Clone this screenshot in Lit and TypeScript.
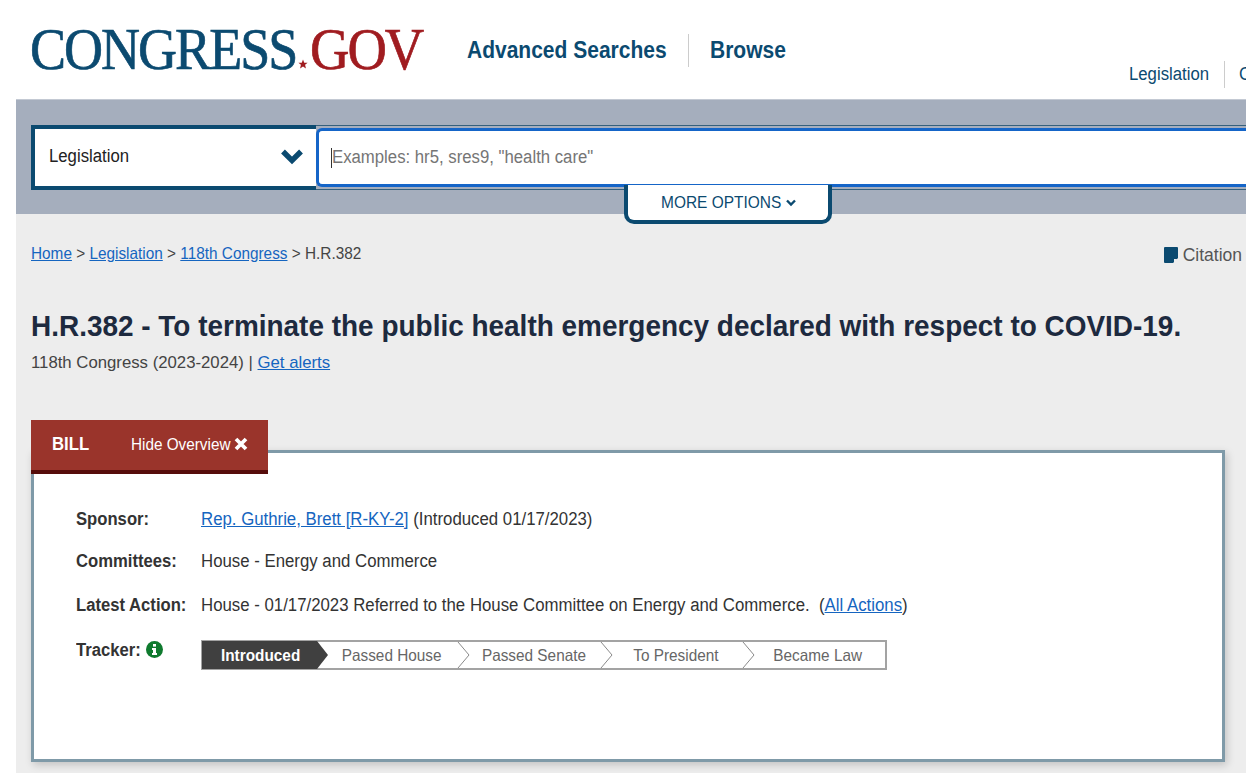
import { LitElement, css, html } from "lit";
import { customElement } from "lit/decorators.js";

const NAVY = css`#0b4a70`;

@customElement("app-root")
export class AppRoot extends LitElement {
  static styles = css`
    :host {
      display: block;
      width: 1250px;
      height: 775px;
      overflow: hidden;
      background: #fff;
      font-family: "Liberation Sans", Arial, sans-serif;
      color: #333;
    }

    a {
      color: #1565c0;
      text-decoration: underline;
    }

    /* the reference type is set narrower than the stock fonts */
    .narrow {
      display: inline-block;
      white-space: nowrap;
      transform: scaleX(var(--sx, 0.93));
      transform-origin: 0 50%;
    }

    .page {
      width: 1230px;
      height: 773px;
      margin-left: 16px;
      overflow: hidden;
      background: #ededed;
    }

    .header {
      display: flex;
      align-items: flex-start;
      height: 99px;
      background: #fff;
      margin-left: -16px;
      padding-left: 30px;
      white-space: nowrap;
    }

    .logo {
      flex: none;
      display: flex;
      align-items: baseline;
      width: 437px;
      margin-top: 15px;
      font-family: "Liberation Serif", "Times New Roman", serif;
      font-size: 60px;
      line-height: 68px;
      letter-spacing: -2.2px;
      color: ${NAVY};
      -webkit-text-stroke: 0.7px currentColor;
    }

    .logo .congress-word {
      flex: none;
      width: 266px;
      --sx: 0.9;
    }

    .logo .gov {
      flex: none;
      width: 114px;
      color: #a01c20;
      --sx: 0.91;
    }

    .logo svg {
      flex: none;
      width: 10px;
      height: 10px;
      margin: 0 2px 0 2px;
    }

    .main-nav {
      flex: none;
      display: flex;
      align-items: center;
      height: 32px;
      margin-top: 34px;
      font-size: 23px;
      font-weight: bold;
      color: ${NAVY};
      --sx: 0.913;
    }

    .main-nav .sep {
      width: 1px;
      height: 33px;
      margin: 0 21px 0 22px;
      background: #ccc;
    }

    .sub-nav {
      flex: none;
      display: flex;
      align-items: center;
      height: 28px;
      margin: 60px 0 0 344px;
      font-size: 18px;
      color: ${NAVY};
    }

    .sub-nav .sep {
      width: 1px;
      height: 27px;
      margin: 0 14px 0 15px;
      background: #ccc;
    }

    .search {
      position: relative;
      display: flex;
      height: 115px;
      padding: 25px 0 0 15px;
      box-sizing: border-box;
      background: #a5aebd;
      border-top: 1px solid #c3c9d3;
    }

    .select {
      display: flex;
      align-items: center;
      justify-content: space-between;
      box-sizing: border-box;
      width: 285px;
      height: 65px;
      padding: 0 12px 2px 14px;
      border: 4px solid ${NAVY};
      border-right: none;
      background: #fff;
      font-size: 18px;
      color: #222;
    }

    .select .label {
      width: 80px;
    }

    .select svg {
      width: 24px;
      height: 16px;
    }

    .input-wrap {
      flex: 1;
      box-sizing: border-box;
      height: 65px;
      padding-top: 2px;
      border-top: 1px solid #35607c;
      border-bottom: 1px solid #35607c;
    }

    .input {
      display: flex;
      align-items: center;
      box-sizing: border-box;
      width: 100%;
      height: 59px;
      padding-left: 12px;
      border: 3px solid #1565c8;
      border-right: none;
      border-radius: 6px 0 0 6px;
      background: #fff;
      font-size: 18px;
      color: #757575;
    }

    .caret {
      width: 1px;
      height: 20px;
      background: #333;
    }

    .more {
      position: absolute;
      top: 85px;
      left: 608px;
      display: flex;
      align-items: center;
      justify-content: center;
      gap: 5px;
      box-sizing: border-box;
      width: 208px;
      height: 39px;
      padding-top: 1px;
      border: 4px solid ${NAVY};
      border-top: none;
      border-radius: 0 0 10px 10px;
      background: #fff;
      font-size: 17px;
      color: ${NAVY};
      --sx: 0.91;
    }

    .more .label {
      width: 120px;
    }

    .more svg {
      width: 10px;
      height: 8px;
    }

    .crumbs {
      display: flex;
      justify-content: space-between;
      height: 39px;
      padding: 29px 4px 0 15px;
      font-size: 16.5px;
      line-height: 20px;
      color: #444;
      white-space: nowrap;
    }

    .citation {
      display: flex;
      align-items: center;
      gap: 5px;
      height: 20px;
      margin-top: 2px;
      font-size: 17.5px;
      color: #555;
    }

    .citation svg {
      width: 14px;
      height: 16px;
    }

    h1 {
      display: block;
      margin: 25px 0 0 15px;
      font-size: 30px;
      line-height: 38px;
      font-weight: bold;
      color: #1d2a3f;
      white-space: nowrap;
      --sx: 0.9315;
    }

    .congress {
      display: block;
      margin: 8px 0 0 15px;
      font-size: 17px;
      line-height: 20px;
      color: #444;
      --sx: 0.985;
    }

    .overview {
      margin: 47px 0 0 15px;
      width: 1194px;
    }

    .tab {
      position: relative;
      z-index: 1;
      display: flex;
      align-items: center;
      box-sizing: border-box;
      width: 237px;
      height: 54px;
      padding: 0 0 1px 21px;
      background: #9a342b;
      border-bottom: 4px solid #560d0b;
      color: #fff;
      font-size: 17px;
    }

    .tab .bill {
      width: 79px;
      font-size: 18px;
      font-weight: bold;
    }

    .tab .hide {
      width: 100px;
      --sx: 0.9;
    }

    .tab svg {
      width: 14px;
      height: 14px;
      margin: -2px 0 0 3px;
    }

    .card {
      box-sizing: border-box;
      height: 312px;
      margin-top: -24px;
      padding: 54px 0 0 42px;
      background: #fff;
      border: 3px solid #7f9aa8;
      box-shadow: 2px 3px 8px rgba(0, 0, 0, 0.18);
    }

    .rows {
      display: grid;
      grid-template-columns: 125px 1fr;
      grid-template-rows: 42px 44px 45px auto;
      font-size: 18px;
      line-height: 24px;
      color: #333;
      white-space: nowrap;
    }

    .rows .term {
      display: flex;
      align-items: flex-start;
      gap: 6px;
      font-weight: bold;
      --sx: 0.925;
    }

    .rows .term .narrow {
      width: 64px;
    }

    .rows .value {
      transform-origin: 0 50%;
      transform: scaleX(0.933);
    }

    .rows svg.info {
      flex: none;
      width: 17px;
      height: 17px;
      margin-top: 3px;
    }

    .tracker {
      display: flex;
      width: 686px;
      height: 30px;
      margin-top: 2px;
      box-sizing: border-box;
      border: 2px solid #a3a3a3;
      border-left-width: 1px;
      font-size: 16.5px;
      line-height: 26px;
      color: #666;
    }

    .step {
      position: relative;
      box-sizing: border-box;
      text-align: center;
    }

    .step .narrow {
      transform-origin: 50% 50%;
    }

    .step.current {
      width: 126px;
      padding-right: 9px;
      margin: -1px 0;
      line-height: 28px;
      background: #404040;
      clip-path: polygon(0 0, 115px 0, 100% 50%, 115px 100%, 0 100%);
      color: #fff;
      font-weight: bold;
    }

    .step svg {
      position: absolute;
      top: 0;
      right: 2px;
      width: 13px;
      height: 26px;
    }
  `;

  private tracker() {
    // widths read off the reference; the chevron sits on each step's right edge
    const steps = [
      { name: "Passed House", width: 144, pad: 17 },
      { name: "Passed Senate", width: 143, pad: 19 },
      { name: "To President", width: 142, pad: 21 },
      { name: "Became Law", width: 128, pad: 7, last: true },
    ];
    return html`
      <div class="tracker">
        <div class="step current"><span class="narrow">Introduced</span></div>
        ${steps.map(
          (s) => html`
            <div class="step" style="width:${s.width}px;padding-right:${s.pad}px">
              <span class="narrow">${s.name}</span>
              ${s.last
                ? ""
                : html`<svg viewBox="0 0 13 26"><path d="M1 0 L12 13 L1 26" fill="none" stroke="#8a8a8a" stroke-width="1" /></svg>`}
            </div>
          `,
        )}
      </div>
    `;
  }

  protected override render() {
    return html`
      <div class="page">
        <header class="header">
          <div class="logo">
            <span class="narrow congress-word">CONGRESS</span>
            <svg viewBox="0 0 24 24"><path d="M12 1 L15 9 L23 9 L17 14 L19 23 L12 18 L5 23 L7 14 L1 9 L9 9 Z" fill="#a01c20" /></svg>
            <span class="narrow gov">GOV</span>
          </div>
          <nav class="main-nav">
            <span class="narrow" style="width:199px">Advanced Searches</span>
            <span class="sep"></span>
            <span class="narrow" style="width:75px">Browse</span>
          </nav>
          <nav class="sub-nav">
            <span class="narrow" style="width:80px">Legislation</span>
            <span class="sep"></span>
            <span class="narrow">Congressional Record</span>
          </nav>
        </header>

        <section class="search">
          <div class="select">
            <span class="narrow label">Legislation</span>
            <svg viewBox="0 0 24 16"><path d="M3 2.5 L12 11.5 L21 2.5" fill="none" stroke="#0b4a70" stroke-width="5.4" /></svg>
          </div>
          <div class="input-wrap">
            <div class="input">
              <span class="caret"></span>
              <span class="narrow">Examples: hr5, sres9, "health care"</span>
            </div>
          </div>
          <div class="more">
            <span class="narrow label">MORE OPTIONS</span>
            <svg viewBox="0 0 10 8"><path d="M1 1.5 L5 5.5 L9 1.5" fill="none" stroke="#0b4a70" stroke-width="2.4" /></svg>
          </div>
        </section>

        <div class="crumbs">
          <div class="narrow">
            <a>Home</a> &gt; <a>Legislation</a> &gt; <a>118th Congress</a> &gt; H.R.382
          </div>
          <div class="citation">
            <svg viewBox="0 0 14 16"><path d="M1 0 H13 Q14 0 14 1 V11 L9 16 H1 Q0 16 0 15 V1 Q0 0 1 0 Z M10 12 V15 L13 12 Z" fill="#0b4a70" fill-rule="evenodd" /></svg>
            <span>Citation</span>
          </div>
        </div>

        <h1 class="narrow">H.R.382 - To terminate the public health emergency declared with respect to COVID-19.</h1>
        <div class="congress narrow">118th Congress (2023-2024) | <a>Get alerts</a></div>

        <div class="overview">
          <div class="tab">
            <span class="narrow bill">BILL</span>
            <span class="narrow hide">Hide Overview</span>
            <svg viewBox="0 0 14 14"><path d="M2 2 L12 12 M12 2 L2 12" stroke="#fff" stroke-width="3.8" /></svg>
          </div>
          <div class="card">
            <div class="rows">
              <div class="term"><span class="narrow">Sponsor:</span></div>
              <div class="value"><a>Rep. Guthrie, Brett [R-KY-2]</a> (Introduced 01/17/2023)</div>
              <div class="term"><span class="narrow">Committees:</span></div>
              <div class="value">House - Energy and Commerce</div>
              <div class="term"><span class="narrow">Latest Action:</span></div>
              <div class="value">House - 01/17/2023 Referred to the House Committee on Energy and Commerce. &nbsp;(<a>All Actions</a>)</div>
              <div class="term">
                <span class="narrow">Tracker:</span>
                <svg class="info" viewBox="0 0 17 17">
                  <circle cx="8.5" cy="8.5" r="8.5" fill="#0f7a2e" />
                  <rect x="7" y="3" width="3" height="2.6" fill="#fff" />
                  <path d="M6 7 H10 V12 H11 V14 H6 V12 H7 V9 H6 Z" fill="#fff" />
                </svg>
              </div>
              ${this.tracker()}
            </div>
          </div>
        </div>
      </div>
    `;
  }
}
